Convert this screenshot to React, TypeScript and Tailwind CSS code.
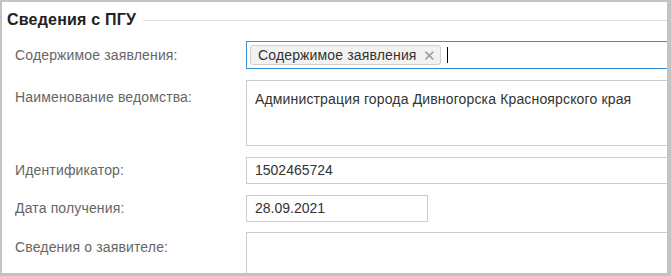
import React from 'react';

const font = { fontFamily: '"Liberation Sans", Arial, sans-serif' };

const App: React.FC = () => {
  return (
    <div className="w-[671px] h-[276px] bg-[#c3c3c3] pt-[2px] pl-[2px] pr-[4px] pb-[3px]" style={font}>
      <div className="w-full h-full bg-white overflow-hidden">
        {/* Section header */}
        <div className="flex items-center h-[36px] pl-[5px]">
          <h2 className="text-[16px] font-bold text-[#222] leading-none tracking-[0.2px]">Сведения с ПГУ</h2>
          <div className="flex-1 h-px bg-[#dedede] ml-[7px]"></div>
        </div>

        <div className="flex flex-col gap-[11px] pl-[13px] mt-[3px] text-[14px] tracking-[0.15px]">
          {/* Содержимое заявления */}
          <div className="flex items-center">
            <div className="w-[231px] shrink-0 text-[#666]">Содержимое заявления:</div>
            <div className="flex-1 h-[28px] border border-[#3892d8] flex items-center pl-[3px] -mr-px">
              <div className="flex items-center h-[20px] pl-[7px] pr-[4px] bg-[#f2f2f2] border border-[#d0d0d0] rounded-[3px] text-[#333]">
                <span>Содержимое заявления</span>
                <span className="ml-[6px] text-[#999] text-[15px] leading-none">✕</span>
              </div>
              <div className="ml-[6px] w-px h-[16px] bg-black"></div>
            </div>
          </div>

          {/* Наименование ведомства */}
          <div className="flex items-start">
            <div className="w-[231px] shrink-0 text-[#666] pt-[7px]">Наименование ведомства:</div>
            <div className="flex-1 h-[66px] border border-[#cccccc] pl-[8px] pt-[8px] text-[#333] -mr-px">
              Администрация города Дивногорска Красноярского края
            </div>
          </div>

          {/* Идентификатор */}
          <div className="flex items-center">
            <div className="w-[231px] shrink-0 text-[#666]">Идентификатор:</div>
            <div className="flex-1 h-[27px] border border-[#cccccc] pl-[8px] flex items-center text-[#333] tracking-normal -mr-px">
              1502465724
            </div>
          </div>

          {/* Дата получения */}
          <div className="flex items-center">
            <div className="w-[231px] shrink-0 text-[#666]">Дата получения:</div>
            <div className="w-[182px] h-[27px] border border-[#cccccc] pl-[8px] flex items-center text-[#333] tracking-normal">
              28.09.2021
            </div>
          </div>

          {/* Сведения о заявителе */}
          <div className="flex items-start -mt-px">
            <div className="w-[231px] shrink-0 text-[#666] pt-[5px]">Сведения о заявителе:</div>
            <div className="flex-1 h-[66px] border border-[#cccccc] -mr-px"></div>
          </div>
        </div>
      </div>
    </div>
  );
};

export default App;
